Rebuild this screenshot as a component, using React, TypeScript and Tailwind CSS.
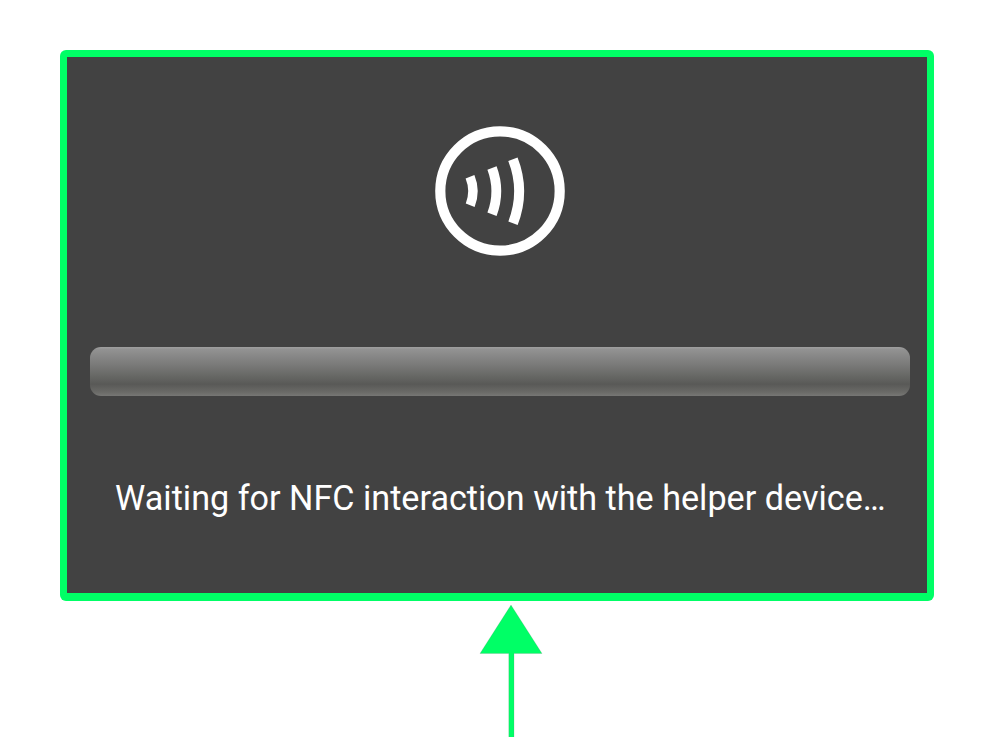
function ContactlessIcon() {
  return (
    <svg className="block shrink-0" width="134" height="134" viewBox="433 124 134 134" fill="none" stroke="#fff">
      <circle cx="500" cy="191" r="59.7" strokeWidth="10.2" />
      <path d="M470 176.8 A38 38 0 0 1 470.2 205.2" strokeWidth="9.5" />
      <path d="M492 168 A66 66 0 0 1 492 214.3" strokeWidth="9.8" />
      <path d="M512.9 159.3 A88 88 0 0 1 513 223.2" strokeWidth="10" />
    </svg>
  );
}

export default function App() {
  return (
    <div className="flex h-[737px] w-[997px] flex-col overflow-hidden bg-white pt-[50px]">
      <main className="ml-[60px] flex h-[551.4px] w-[874.4px] shrink-0 flex-col items-start rounded-[6px] bg-[#00ff66] pl-[7px] pt-[7px]">
        <div className="flex h-[536px] w-[860.4px] flex-col items-start bg-[#424242] pt-[67px]">
          <div className="ml-[366px]">
            <ContactlessIcon />
          </div>
          <div className="ml-[23.4px] mt-[88.5px] h-[49px] w-[820px] shrink-0 rounded-[11px] bg-[linear-gradient(180deg,#a0a0a0_0%,#929292_5%,#7a7a79_36%,#666764_60%,#595957_76%,#6a6a67_92%,#777775_100%)]" />
          <p
            className="ml-[48px] mt-[83.5px] origin-left scale-x-[0.976] whitespace-nowrap text-[35px] leading-[40px] text-white"
            style={{ fontFamily: "Roboto, sans-serif" }}
          >
            Waiting for NFC interaction with the helper device…
          </p>
        </div>
      </main>
      <svg className="ml-[478px] block shrink-0" width="66" height="136" viewBox="478 601 66 136">
        <path d="M511 605 L542 653.5 H514 V738 H508.8 V653.5 H480 Z" fill="#00ff66" stroke="#777" strokeWidth=".2" />
      </svg>
    </div>
  );
}
